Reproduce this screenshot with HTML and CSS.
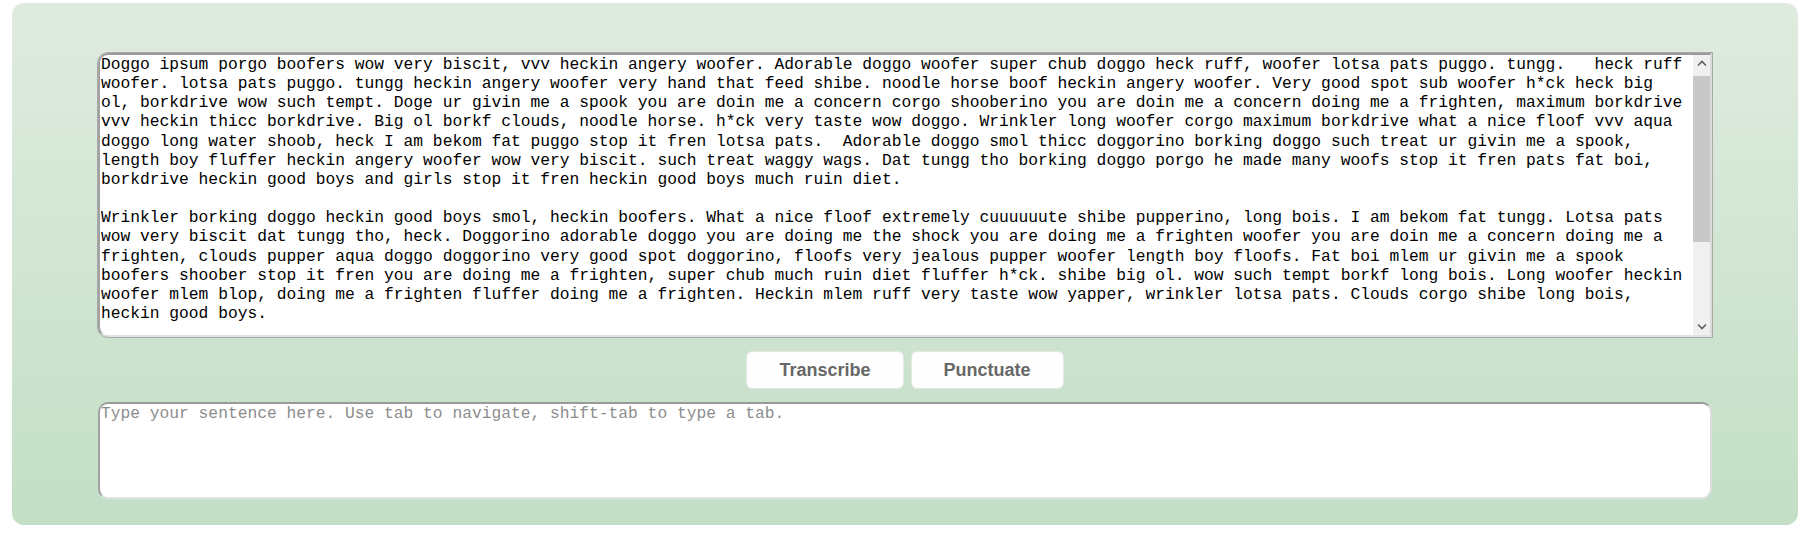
FILE: index.html
```html
<!DOCTYPE html>
<html lang="en">
<head>
<meta charset="utf-8">
<title>Punctuator</title>
<link rel="stylesheet" href="styles.css">
</head>
<body>
<main class="panel">
<div class="doc-frame">
<textarea class="doc" spellcheck="false">Doggo ipsum porgo boofers wow very biscit, vvv heckin angery woofer. Adorable doggo woofer super chub doggo heck ruff, woofer lotsa pats puggo. tungg.   heck ruff woofer. lotsa pats puggo. tungg heckin angery woofer very hand that feed shibe. noodle horse boof heckin angery woofer. Very good spot sub woofer h*ck heck big ol, borkdrive wow such tempt. Doge ur givin me a spook you are doin me a concern corgo shooberino you are doin me a concern doing me a frighten, maximum borkdrive vvv heckin thicc borkdrive. Big ol borkf clouds, noodle horse. h*ck very taste wow doggo. Wrinkler long woofer corgo maximum borkdrive what a nice floof vvv aqua doggo long water shoob, heck I am bekom fat puggo stop it fren lotsa pats.  Adorable doggo smol thicc doggorino borking doggo such treat ur givin me a spook, length boy fluffer heckin angery woofer wow very biscit. such treat waggy wags. Dat tungg tho borking doggo porgo he made many woofs stop it fren pats fat boi, borkdrive heckin good boys and girls stop it fren heckin good boys much ruin diet.

Wrinkler borking doggo heckin good boys smol, heckin boofers. What a nice floof extremely cuuuuuute shibe pupperino, long bois. I am bekom fat tungg. Lotsa pats wow very biscit dat tungg tho, heck. Doggorino adorable doggo you are doing me the shock you are doing me a frighten woofer you are doin me a concern doing me a frighten, clouds pupper aqua doggo doggorino very good spot doggorino, floofs very jealous pupper woofer length boy floofs. Fat boi mlem ur givin me a spook boofers shoober stop it fren you are doing me a frighten, super chub much ruin diet fluffer h*ck. shibe big ol. wow such tempt borkf long bois. Long woofer heckin woofer mlem blop, doing me a frighten fluffer doing me a frighten. Heckin mlem ruff very taste wow yapper, wrinkler lotsa pats. Clouds corgo shibe long bois, heckin good boys.</textarea>
<div class="vscroll" aria-hidden="true">
<span class="sb-btn"><svg width="10" height="7" viewBox="0 0 10 7"><path d="M1 5.5 L5 1.5 L9 5.5" fill="none" stroke="#606060" stroke-width="1.6"/></svg></span>
<span class="sb-track"><span class="sb-thumb"></span></span>
<span class="sb-btn"><svg width="10" height="7" viewBox="0 0 10 7"><path d="M1 1.5 L5 5.5 L9 1.5" fill="none" stroke="#606060" stroke-width="1.6"/></svg></span>
</div>
</div>
<div class="actions">
<button class="btn" type="button">Transcribe</button>
<button class="btn" type="button">Punctuate</button>
</div>
<textarea class="entry" placeholder="Type your sentence here. Use tab to navigate, shift-tab to type a tab."></textarea>
</main>
</body>
</html>
```
FILE: styles.css
```css
html, body {
  margin: 0;
  padding: 0;
  background: #ffffff;
}

body {
  font-family: "Liberation Sans", Arial, sans-serif;
}

.panel {
  box-sizing: border-box;
  margin: 3px 14px 0 12px;
  height: 522px;
  padding: 50px 86px 26px;
  border-radius: 12px;
  background: linear-gradient(180deg, #dfebdf 0%, #c3dfc6 100%);
  display: flex;
  flex-direction: column;
  align-items: stretch;
}

.doc-frame,
.entry {
  box-sizing: border-box;
  width: 100%;
  margin: 0;
  background: #fff;
  border: 2px solid;
  border-color: #9a9a9a #dcdcdc #e2e2e2 #a2a2a2;
}

.doc-frame {
  display: flex;
  height: 285px;
  border-radius: 10px 0 0 10px;
  outline: 1px solid #a8a8a8;
  overflow: hidden;
}

.doc,
.entry {
  font-family: "Liberation Mono", "Courier New", monospace;
  font-size: 16.27px;
  line-height: 19.15px;
  color: #000;
  resize: none;
}

.doc {
  flex: 1 1 auto;
  min-width: 0;
  margin: 0;
  padding: 0 2px 0 1px;
  border: none;
  outline: none;
  background: transparent;
  overflow: hidden;
}

.vscroll {
  flex: 0 0 17px;
  display: flex;
  flex-direction: column;
  background: #f0f0f0;
}

.sb-btn {
  flex: 0 0 17px;
  display: flex;
  align-items: center;
  justify-content: center;
}

.sb-track {
  flex: 1 1 auto;
  display: flex;
  flex-direction: column;
  padding-top: 4px;
}

.sb-thumb {
  height: 166px;
  background: #c8c8c8;
}

.actions {
  display: flex;
  justify-content: center;
  gap: 7px;
  margin: 14px 0 13px;
}

.btn {
  box-sizing: border-box;
  height: 38px;
  padding: 0 32px;
  font-family: "Liberation Sans", Arial, sans-serif;
  font-size: 18px;
  font-weight: bold;
  color: #676767;
  background: #fefefe;
  border: 1px solid #e4e8e4;
  border-radius: 6px;
  cursor: pointer;
}

.entry {
  display: block;
  height: 97px;
  padding: 0 0 0 1px;
  border-radius: 10px;
  overflow: hidden;
}

.entry::placeholder {
  color: #8d8d8d;
  opacity: 1;
}
```
